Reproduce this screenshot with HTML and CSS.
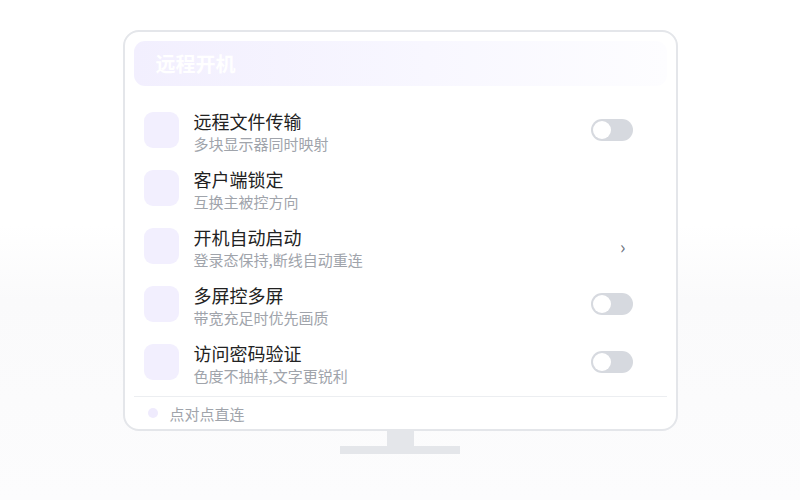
FILE: index.html
```html
<!DOCTYPE html>
<html lang="zh-CN">
<head>
  <meta charset="UTF-8" />
  <title>远程开机</title>
  <link rel="stylesheet" href="styles.css">
</head>
<body>

  <div class="monitor">
    <div class="screen">
      <div class="header">远程开机</div>

      <div class="list">
        <div class="row">
          <div class="icon"></div>
          <div class="text">
            <div class="title">远程文件传输</div>
            <div class="sub">多块显示器同时映射</div>
          </div>
          <div class="action"><span class="toggle"></span></div>
        </div>
        <div class="row">
          <div class="icon"></div>
          <div class="text">
            <div class="title">客户端锁定</div>
            <div class="sub">互换主被控方向</div>
          </div>
          <div class="action"></div>
        </div>
        <div class="row">
          <div class="icon"></div>
          <div class="text">
            <div class="title">开机自动启动</div>
            <div class="sub">登录态保持,断线自动重连</div>
          </div>
          <div class="action"><span class="chevron">›</span></div>
        </div>
        <div class="row">
          <div class="icon"></div>
          <div class="text">
            <div class="title">多屏控多屏</div>
            <div class="sub">带宽充足时优先画质</div>
          </div>
          <div class="action"><span class="toggle"></span></div>
        </div>
        <div class="row">
          <div class="icon"></div>
          <div class="text">
            <div class="title">访问密码验证</div>
            <div class="sub">色度不抽样,文字更锐利</div>
          </div>
          <div class="action"><span class="toggle"></span></div>
        </div>
      </div>

      <div class="footer">
        <span class="dot"></span>
        <span>点对点直连</span>
      </div>
    </div>
    <div class="neck"></div>
    <div class="base"></div>
  </div>

</body>
</html>
```

FILE: styles.css
```css
body {
  margin: 0;
  height: 500px;
  font-family: "Noto Sans CJK SC", "Noto Sans", sans-serif;
  background: linear-gradient(180deg, #fff 45%, #fafafb 60%, #fcfcfd);
}

.monitor {
  display: flex;
  flex-direction: column;
  align-items: center;
  padding-top: 30px;
}

.screen {
  width: 533px;
  height: 386px;
  padding: 9px 9px 2px;
  border: 2px solid #e4e6ea;
  border-radius: 16px;
  background: #fff;
  display: flex;
  flex-direction: column;
}

.header {
  height: 45px;
  line-height: 45px;
  padding-left: 22px;
  border-radius: 11px;
  background: linear-gradient(90deg, #f2effe, #f8f7ff 55%, #fdfdff);
  color: #fff;
  font-size: 20px;
  font-weight: bold;
  margin-bottom: 15px;
}

.row {
  height: 58px;
  display: flex;
  align-items: center;
  padding: 0 34px 0 10px;
}

.icon {
  width: 35px;
  height: 36px;
  border-radius: 9px;
  background: #f2effe;
  margin-right: 15px;
  flex: none;
}

.text {
  flex: 1;
  margin-top: 3px;
}

.title {
  font-size: 18px;
  line-height: 23px;
  color: #222;
}

.sub {
  font-size: 15px;
  line-height: 21px;
  color: #a0a4ab;
}

.action {
  width: 42px;
  display: flex;
  justify-content: flex-end;
}

.toggle {
  display: block;
  width: 42px;
  height: 22px;
  border-radius: 11px;
  background: #d6d9df;
  position: relative;
}

.toggle::after {
  content: "";
  position: absolute;
  left: 2px;
  top: 2px;
  width: 18px;
  height: 18px;
  border-radius: 50%;
  background: #fff;
}

.chevron {
  font-size: 18px;
  color: #6b7280;
  margin-right: 7px;
  line-height: 20px;
}

.footer {
  margin-top: 5px;
  border-top: 1px solid #eceef1;
  height: 30px;
  padding-top: 3px;
  box-sizing: border-box;
  display: flex;
  align-items: center;
  padding-left: 14px;
  font-size: 15px;
  color: #a0a4ab;
}

.dot {
  width: 10px;
  height: 10px;
  border-radius: 50%;
  background: #efebfd;
  margin-right: 12px;
}

.neck {
  width: 27px;
  height: 15px;
  background: #e4e6ea;
}

.base {
  width: 120px;
  height: 8px;
  background: #e4e6ea;
}
```
